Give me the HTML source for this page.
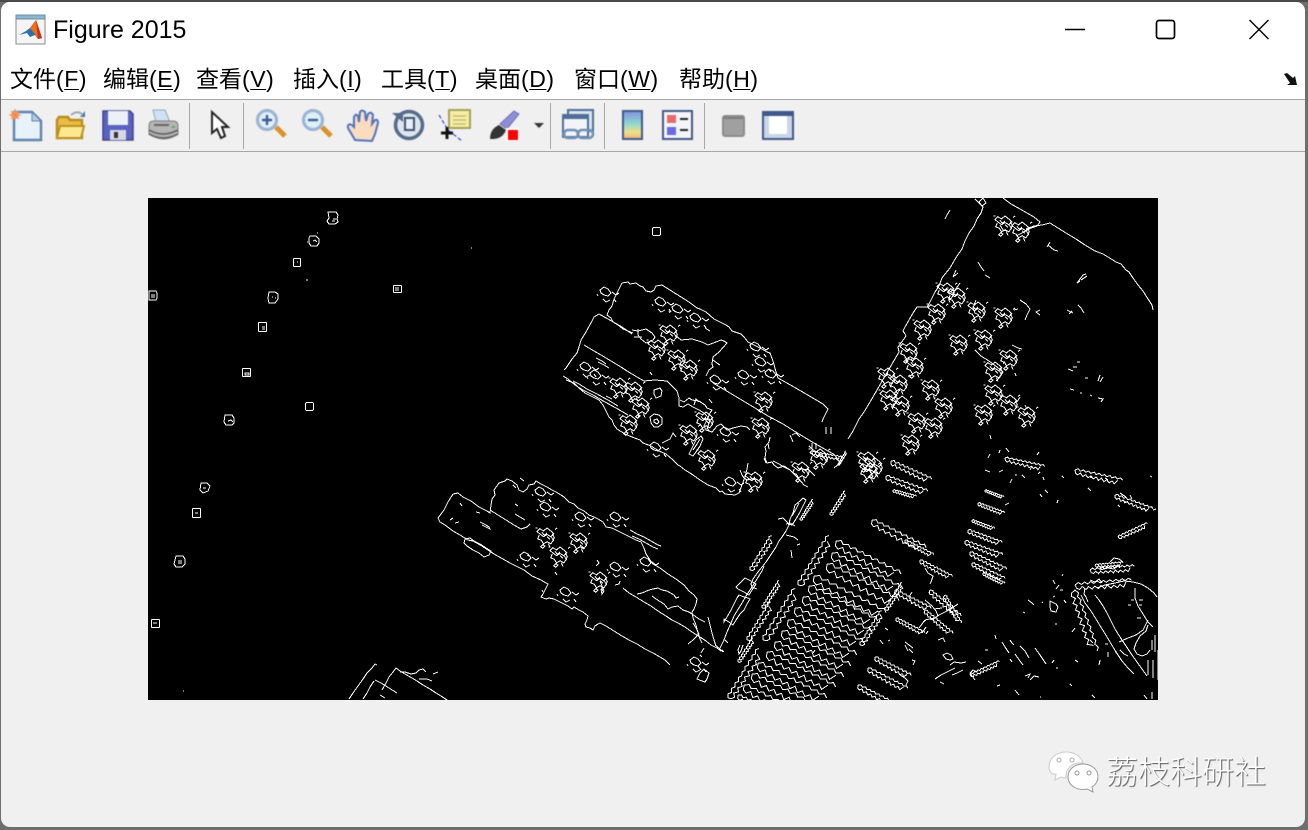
<!DOCTYPE html>
<html lang="zh">
<head>
<meta charset="utf-8">
<title>Figure 2015</title>
<style>
html,body{margin:0;padding:0;width:1308px;height:830px;overflow:hidden;background:#6e6e6e}
#top{position:absolute;left:0;top:0;width:1308px;height:2px;background:#4a4a4a}
#win{position:absolute;left:1px;top:2px;width:1304px;height:825px;background:#f0f0f0;border-radius:9px;overflow:hidden}
#head{position:absolute;left:0;top:0;width:1304px;height:97px;background:#fff;border-bottom:1px solid #a6a6a6}
#tb{position:absolute;left:0;top:98px;width:1304px;height:51px;background:#f0f0f0;border-bottom:1px solid #a6a6a6}
.t{position:absolute;white-space:nowrap;color:#000;font-family:"Liberation Sans","Noto Sans CJK SC",sans-serif}
#title{left:53px;top:15px;font-size:25px;line-height:30px}
.m{top:64px;font-size:23px;line-height:30px}
.m b{font-weight:400;letter-spacing:.55px}
.m u{text-underline-offset:2px;text-decoration-thickness:1px}
.sep{position:absolute;top:103px;width:1px;height:46px;background:#a8a8a8}
svg{position:absolute;display:block}
#img path{vector-effect:non-scaling-stroke}
#icons{filter:blur(.55px)}
#wm{left:1106px;top:752px;font-size:32px;line-height:40px;color:#fff;font-family:"Liberation Sans","Noto Sans CJK SC",sans-serif;text-shadow:1px 1px 1px #555;font-weight:300}
</style>
</head>
<body>
<div id="top"></div>
<div id="win"><div id="head"></div><div id="tb"></div></div>

<!-- app icon -->
<svg style="left:15px;top:14px;filter:blur(.3px)" width="32" height="31" viewBox="0 0 32 31">
<rect x="1" y="1" width="29" height="29" fill="#f5f5f5" stroke="#8a8a8a"/>
<rect x="1" y="1" width="29" height="4" fill="#8fb4cf" stroke="#6d8ea8"/>
<path d="M4 21l7-4 4-3 6-8 6 18-4 1-3-4-5 2-3-4z" fill="#2f6fb0"/>
<path d="M15 14l6-8 6 18-4 1-3-5z" fill="#e8711a"/>
<path d="M21 6l6 18-4 1z" fill="#c9301f"/>
</svg>
<div class="t" id="title">Figure 2015</div>

<!-- window controls -->
<svg style="left:1060px;top:15px" width="220" height="30" viewBox="0 0 220 30">
<path d="M5 14.5h20" stroke="#000" stroke-width="1.6"/>
<rect x="96.500" y="5.500" width="18" height="18" rx="2.500" fill="none" stroke="#000" stroke-width="1.700"/>
<path d="M189.500 5l19 19M208.500 5l-19 19" stroke="#000" stroke-width="1.400"/>
</svg>

<!-- menu -->
<div class="t m" style="left:10px">文件<b>(<u>F</u>)</b></div>
<div class="t m" style="left:103px">编辑<b>(<u>E</u>)</b></div>
<div class="t m" style="left:196px">查看<b>(<u>V</u>)</b></div>
<div class="t m" style="left:293px">插入<b>(<u>I</u>)</b></div>
<div class="t m" style="left:381px">工具<b>(<u>T</u>)</b></div>
<div class="t m" style="left:475px">桌面<b>(<u>D</u>)</b></div>
<div class="t m" style="left:574px">窗口<b>(<u>W</u>)</b></div>
<div class="t m" style="left:679px">帮助<b>(<u>H</u>)</b></div>
<svg style="left:1283px;top:72px" width="16" height="14" viewBox="0 0 16 14">
<path d="M1 2l3-1 6 5 2-2 2 9H4l3-2z" fill="#111"/>
</svg>

<div class="sep" style="left:189px"></div>
<div class="sep" style="left:243px"></div>
<div class="sep" style="left:550px"></div>
<div class="sep" style="left:604px"></div>
<div class="sep" style="left:704px"></div>

<!-- toolbar icons -->
<svg id="icons" style="left:0;top:100px" width="810" height="50" viewBox="0 100 810 50">
<!-- new -->
<path d="M14 112h18l9 9v19H14z" fill="#e8f2fb" stroke="#5f83ad" stroke-width="2.400"/>
<path d="M32 112v9h9z" fill="#b9cde3" stroke="#5f83ad"/>
<circle cx="15" cy="115" r="4" fill="#f4a060"/><path d="M15 109v12M9 115h12M11 111l8 8M19 111l-8 8" stroke="#ee8a50"/>
<!-- open -->
<path d="M57 138v-18l2-3h9l2 3h12v18z" fill="#e9bd45" stroke="#b98d1d" stroke-width="2.400"/>
<path d="M57 138l3-12h24l-3 12z" fill="#fde88f" stroke="#bc931f" stroke-width="2"/>
<path d="M71 115q6-5 11-1" fill="none" stroke="#9aaab8" stroke-width="2"/><path d="M85 111v6h-5z" fill="#4c7ba5"/>
<!-- save -->
<path d="M103 111h27l3 3v26h-30z" fill="#5a62c2" stroke="#3e4585" stroke-width="1.500"/>
<rect x="108" y="111" width="20" height="14" fill="#eef0f8"/>
<rect x="110" y="130" width="16" height="10" fill="#d8d8e4"/><rect x="114" y="132" width="4" height="6" fill="#333"/>
<!-- print -->
<path d="M153 110h12l5 12h-14z" fill="#cfe2f5" stroke="#93a7bb"/>
<path d="M149 126q0-5 5-5h19q5 0 5 5v8q-14 10-29 0z" fill="#b5b5b5" stroke="#7d7d7d"/>
<path d="M149 130q14 8 29 0M149 134q14 8 29 0" fill="none" stroke="#666" stroke-width="1.800"/><path d="M154 125h15" stroke="#666" stroke-width="2"/><path d="M172 127h3" stroke="#4caf50" stroke-width="2"/>
<!-- pointer -->
<path d="M212 112v21l5-4 4 9 4-2-3-9h6z" fill="#fff" stroke="#222" stroke-width="2"/>
<!-- zoom in -->
<path d="M276 127l9 9" stroke="#db922d" stroke-width="5"/>
<circle cx="267" cy="120" r="9.500" fill="#dff0fa" stroke="#9db5d4" stroke-width="3.200"/>
<path d="M262 120h10M267 115v10" stroke="#3c5b90" stroke-width="2.400"/>
<!-- zoom out -->
<path d="M322 127l9 9" stroke="#db922d" stroke-width="5"/>
<circle cx="313" cy="120" r="9.500" fill="#dff0fa" stroke="#9db5d4" stroke-width="3.200"/>
<path d="M308 120h10" stroke="#3c5b90" stroke-width="2.400"/>
<!-- hand -->
<path d="M355 140l-7-12q-1-5 4-3l2 2 0-10q2-4 4-1l1 6 1-10q2-3 5 0l1 9 2-7q3-3 5 1l-1 9 3-4q3-1 3 3l-3 11-3 7z" fill="#fbdcbf" stroke="#4f74c4" stroke-width="2"/>
<!-- rotate -->
<circle cx="409" cy="125" r="13.500" fill="#dfe5ec" stroke="#556c8a" stroke-width="3.500"/>
<path d="M392 113h11v9z" fill="#556c8a"/>
<rect x="405" y="118" width="9" height="12" fill="#e8eef5" stroke="#3c5370" stroke-width="2"/>
<!-- data cursor -->
<rect x="449" y="110" width="21" height="18" fill="#f4eda2" stroke="#a4a15e" stroke-width="2"/>
<path d="M453 116h13M453 120h13M453 124h13" stroke="#b5ae5e"/>
<path d="M439 115l9 15 14 11" fill="none" stroke="#2020e0" stroke-dasharray="4 2"/>
<path d="M447 127v12M441 133h12" stroke="#111" stroke-width="3"/>
<!-- brush -->
<path d="M500 124l14-13 5 3-12 15z" fill="#8d8fd6" stroke="#6c6eb3"/>
<path d="M490 139q0-10 9-14l7 5q-3 8-12 9z" fill="#333"/>
<rect x="506" y="128" width="13" height="13" fill="#fff"/><rect x="508" y="130" width="10" height="10" fill="#f00"/>
<path d="M534 123h10l-5 5z" fill="#333"/>
<!-- link -->
<rect x="568" y="110" width="25" height="21" fill="#dde4ee" stroke="#4d6f99" stroke-width="2"/>
<rect x="563" y="115" width="25" height="22" fill="#f3f4f8" stroke="#4d6f99" stroke-width="2"/>
<rect x="563" y="115" width="25" height="4" fill="#4d6f99"/>
<rect x="564" y="130" width="14" height="8" rx="4" fill="none" stroke="#6f90b5" stroke-width="2.600"/>
<rect x="578" y="130" width="15" height="8" rx="4" fill="none" stroke="#6f90b5" stroke-width="2.600"/>
<!-- colorbar -->
<defs><linearGradient id="cb" x1="0" y1="0" x2="0" y2="1"><stop offset="0" stop-color="#7f8fe0"/><stop offset=".45" stop-color="#8ed8d0"/><stop offset=".75" stop-color="#eee08a"/><stop offset="1" stop-color="#f2b27a"/></linearGradient></defs>
<rect x="623" y="111" width="19" height="28" fill="url(#cb)" stroke="#41598a" stroke-width="2"/>
<!-- legend -->
<rect x="663" y="111" width="29" height="28" fill="#f4f5f8" stroke="#41598a" stroke-width="2"/>
<rect x="667" y="115" width="9" height="8" fill="#e86a6a"/><rect x="667" y="127" width="9" height="8" fill="#6a6ae8"/>
<path d="M680 119h8M680 130h8" stroke="#222" stroke-width="2"/>
<!-- gray box -->
<rect x="723" y="116" width="21" height="20" rx="2" fill="#a0a0a0" stroke="#8c8c8c" stroke-width="2"/>
<path d="M724 118h19" stroke="#7d7d7d" stroke-width="2"/>
<!-- frame -->
<rect x="763" y="112" width="30" height="27" fill="#c8d6e8" stroke="#41598a" stroke-width="2"/>
<rect x="763" y="112" width="30" height="4" fill="#41598a"/>
<rect x="769" y="116" width="18" height="18" fill="#fff"/>
</svg>

<!-- edge image -->
<svg id="img" style="left:148px;top:198px" width="1010" height="502" viewBox="148 198 1010 502" shape-rendering="crispEdges">
<defs>
<path id="r" d="M0 0l5-3 4 3 5-3 4 3 5-3 4 3 5-3 4 3 5-3 4 3 5-3 4 3 5-3 4 3 5-3 4 3 5-3 4 3M0 0l2 5 4 2 4-4 5 5 4-4 5 4 4-4 5 4 4-4 5 5 4-5 5 5 4-4 5 4 4-4 5 4 4-7"/>
<g id="c" transform="scale(.72)"><path d="M0 5l4-4 5 3 5-4 5 4 4 4-4 4-5-3-5 3-4-3zM3 10l-2 5 5 2 3 5 5-3 5 3 4-5-3-4M7 6l3 4 4-3M14 12l4 4M21 8l3 5-2 5M-2 0h3M25 2l3-2M8 23l-3 3 3 2 3-3zM16 22l2 5"/></g>
<path id="b" d="M0 0l4-3 4 2 3 4-3 3-4-1-3-2zM12 2l4 3 3-2M3 9l3 3 4-2M14 9l2 3M-3 4l1 2"/>
<path id="w" d="M0 0l4-2 4 3 4-3 4 3 4-3 4 3 3-2"/>
</defs>
<rect x="148" y="198" width="1010" height="502" fill="#000"/>
<g fill="none" stroke="#fff" stroke-width="1">
<!-- small objects -->
<path d="M328 212h8l2 3-1 4 1 3-3 2h-6l-2-3 2-3zM333 219h3M332 221h3"/>
<path d="M310 236h6l3 3v4l-2 3h-6l-2-3v-5zM313 241l2-1 2 2M317 233h1M307 242h1"/>
<rect x="293.500" y="258.500" width="7" height="8" rx="1"/><path d="M297 262h1"/>
<path d="M269 292h6l3 2v5l-3 4h-6l-1-5zM272 297h1M275 298h1"/>
<rect x="258.500" y="322.500" width="8" height="9" rx="1"/><path d="M262 327h3M262 329h3"/>
<rect x="242.500" y="368.500" width="8" height="8" rx="1"/><path d="M245 373h4v2h-4z"/>
<path d="M225 415h7l2 3v5l-2 2h-6l-2-3zM228 421l3-1 2 2"/>
<rect x="305.500" y="402.500" width="8" height="8" rx="1.500"/>
<path d="M201 483h6l3 3-2 5-5 2-3-3zM203 488h3"/>
<rect x="192.500" y="508.500" width="8" height="9" rx="1"/><path d="M195 513h3"/>
<path d="M176 556h7l2 3v5l-3 3h-6l-2-3zM178 561h4M178 563h4"/>
<rect x="151.500" y="619.500" width="8" height="8" rx="1"/><path d="M153 623h4"/>
<path d="M150 291h6l1 2v5l-1 2h-7v-9zM151 295h4M151 297h4"/>
<rect x="393.500" y="285.500" width="8" height="7" rx="1"/><path d="M395 288h4M395 290h4"/>
<rect x="652.500" y="227.500" width="8" height="8" rx="1.500"/>
<path d="M471 248h1M183 691h1M307 279v2"/>

<!-- upper pier -->
<path d="M622 283l6-1 2 2 6-1 4 3 3 1 3 4 5 1 3-2 2-4 6-1 27 17 8 6 3 1 6 3 8 7 12 6 3 2 3 4 9 3 3 3 4 5 14 7 5 3 3 1 3 8 3 11 2 6 16 9 12 7 17 10 5 5-5 10-1 3"/>
<path d="M622 283l-8 16-2 7-3 4-2 5 4 3 2 4 5 3 5 4 10 4"/>
<path d="M632 334l-10-7-14-8-9-5-5 3-2 4-6 11-5 8-2 7-2 6-5 6-6 9-2 2"/>
<path d="M563 376l5 3 7 6 8 5 10 5 12 7 11 6 12 7M573 381l6 3 8 5 10 5 11 6 10 6M566 380l8 3 5 5 6 5 8 4 6 3 4 5 3 6 3 6 3 3 2 5 3 4 8 5 7 3 8 3 3 3 8 3 8 5 7 3 7 6 5 5 2 1 5 4 5 3 3 2 7 5 8 5 8 3 4 4 2-1 3 3 10 1 4-2 3-8 3-8 2-8 1-6"/>
<path d="M584 345l10 6 7 4 10 6 10 6 6 4 10 6 7 4 11-1 12 1 5 5 5 5 2 7v8l4 1 5-3 5 3 6 3 5 3 2 2 4 5-3 9"/>
<path d="M632 330l6 1 8-2 6 4 3 4-2 3-7 3-5-4-3-4v-6M634 337h8"/>
<path d="M675 335l6 5 11-1 10 3 6 3 8-3 5-2 3 1 3 2-8 9-6 5-1 7 1 3-4 3-3 6"/>
<path d="M713 383l12 7 15 9 15 9 13 8 15 8 16 10 15 9 14 8 7 4"/>
<path d="M680 400l4 2 5-4 3 2 7 1 6 4 2 3 5 2-2 3-3 7-3 6 2 4 6 2 5-6 4-2 3 3 3 3 6-2 8-2 6 1 3 3"/>
<path d="M770 437l-1 5-4 5 1 4-1 7 2 5 5-1 2 3 4 3 6-2 3 2 3 2 5 5 4 4 5 6 4 2"/>
<path d="M740 470l2 5 2 3 3 2 5-1 4 1"/>
<path d="M802 470l6-1 4 4 3 3M817 452l5 3 3 4 2 2 1-4M809 446l3 3 4 3M792 435l4-2 4 4"/>
<!-- lower pier -->
<path d="M453 494l-5 8-4 8-6 8 2 4 5 3 8 6 7 4 8 5 5 1 9 5 12 8 16 9 14 7 8 6 9 4 5 3 2 1-2 4-3 6-2 3 5 2 3-1 5 1 8 4 6 3 4 3 2-2 5 3 4 2 5 4-1 4-2 4 1 3 4 1 3 2 2-4 3-2 2-1 6 3 8 5 8 5 7 4 8 4 8 5 8 4 7 4 5 3 5 5"/>
<path d="M453 494l5-1 5 4 8 4 8 6 8 4 3 2 1-8 1-6 3-4-1-5 5-7 6-2 2-2 5 2 5 4 2 5 4 2 4-3 2-4 5-1 2-3 5 3 6 3 5 3 4 2 5 3 3 2 5 5 5 2 4 4 6 3 5 4 5 2 4 2 5 3 3 5 6 1 8 4 8 4 8 4 5 2 3 6 2 6 4 6 3 4 7 4 8 6 8 5 8 6 5 6 5 4 3 4-1 5-2 5-2 3 1 6 3 7 2 8 2 6 2 4"/>
<path d="M490 510l8 5 8 5 8 5 7 4 6-2 3-3M515 514l5 3 5 3"/>
<path d="M465 539l-1 4 3 3 6 4 6 3 5 4 5-2 2-4-5-3-6-4-6-3-4-3zM480 522l6 3 3 2 1 2-2-1-6-3"/>
<path d="M623 588l6 5 7 4 8 5 7 4 7 5 8 5 6 4 6 3 7 4 7 5 8 5 6 4 5 4 6 3 4 3M637 594l5-1 7-3 4-1 5-1 4 2 5 1 7 4 2 3 3-1M652 596l4 3 8 5 4 5 4-2 6-1 5 4 6 2 3 2 7 5 6 3"/>
<path d="M693 623l3 5 3 6-6 6-5 4M708 617l2 8 2 8 2 7 2 6"/>
<path d="M700 673l-3 6 5 2 3 1 2-3 2-6-5-4zM715 645l5 4 3 3"/>
<!-- road left edge -->
<path d="M975 199l8 8-2 6-4 6-3 7-5 7-4 8-3 8-5 7-3 5-4 7-5 6-3 4-3 8-4 6-3 6-3 6-2 3h-10l-4 6-4 7-4 7-2 4 2 3 1 2-5 7-3 4 1 5-7 12-7 12-8 14-7 12-6 10-5 7-6 12-5 8"/>
<path d="M1003 198l8 6 9 5 7 4 7 4 6 5-3 4-6 2-9 5-6 3M1026 229l8-3 8-1 8-2 8 5 8 5 10 6 9 6 10 6 8 3 5 3 8 5 5 2 5 6 3 2 4 6 5 7 5 6 5 8 4 6 1 5"/>
<path d="M720 648l4-8 3-8 4-9 3-7 3-5 5-8 4-7 6-9 5-8 5-8 2-5"/>
<path d="M778 519l5-1 4 4 2 3-3 6-4 6-3 4-3 6-6 9-4 6-4 5-4 5-5 7-2 5 1 3 5 2"/>
<path d="M724 622l3-5 4-7 3-6 3-6 2-3 5 2 4 1 2 1-3 5-3 6-4 4-4 6-3 5-4-3-5-3z"/>
<path d="M740 583l5-5 6 3 5 3-4 6-3 5-5-3-6-3-2-2z"/>
<path d="M795 505l5-4 3-3 3 2-2 4-4 8-4 7-4 6-3-1 1-5 3-6zM799 503l-3 6-4 7M786 524l4-1 5 3M786 535l8 2 4 3M791 550l1 8M797 545l3-1"/>
<path d="M725 640l3 3M740 645l-2 5 1 4 2-3 2-6M773 461l6 3 5 3 6 3M764 458l2 5M835 455l5 8-6 5M815 650l-2 3"/>
<!-- bottom left pier -->
<path d="M349 699l4-6 5-7 5-7 4-6 5-5 3-4 2 1M363 699l4-6 3-6 4-6M382 690l4-7 3-6 4-5 3-4 4 3 5 3 7 4 5 3 6 4 7 4 6 4 5 3 6 4 4 4M400 672h5l6 2 5-1 3-3 4-1 3 3M438 672l-5 2M375 680l6 3 8 5 8 5M380 695l5 3M419 679h8l5 2"/>
<!-- dense road-side strips -->
<g>
<use href="#r" transform="translate(728,698) rotate(-58) scale(.72)"/>
<use href="#r" transform="translate(763,640) rotate(-58) scale(.75)"/>
<use href="#r" transform="translate(798,585) rotate(-58) scale(.72)"/>
<use href="#r" transform="translate(800,520) rotate(-58) scale(.3)"/>
<use href="#r" transform="translate(747,640) rotate(-58) scale(.55)"/>
<use href="#r" transform="translate(762,608) rotate(-58) scale(.4)"/>
<use href="#r" transform="translate(738,662) rotate(-58) scale(.35)"/>
<use href="#r" transform="translate(830,515) rotate(-58) scale(.35)"/>
<use href="#r" transform="translate(750,570) rotate(-58) scale(.5)"/>
</g>
<!-- dense blocks by the junction -->
<g>
<use href="#c" x="858" y="452"/><use href="#c" x="865" y="458"/><use href="#c" x="860" y="463"/>
<use href="#r" transform="translate(891,461) rotate(24) scale(.55)"/>
<use href="#r" transform="translate(886,476) rotate(20) scale(.55)"/>
<use href="#r" transform="translate(893,490) rotate(15) scale(.3)"/>
<use href="#r" transform="translate(812,452) rotate(10) scale(.38)"/>
<use href="#r" transform="translate(838,465) rotate(-60) scale(.2)"/>
</g>
<!-- building rows -->
<g>
<use href="#r" transform="translate(872,520) rotate(27) scale(.75)"/>
<use href="#r" transform="translate(836,541) rotate(27) scale(.9)"/>
<use href="#r" transform="translate(832,553) rotate(27) scale(.95)"/>
<use href="#r" transform="translate(827,564) rotate(27) scale(1)"/>
<use href="#r" transform="translate(814,576) rotate(27) scale(1)"/>
<use href="#r" transform="translate(809,586) rotate(27) scale(.95)"/>
<use href="#r" transform="translate(803,597) rotate(27) scale(.95)"/>
<use href="#r" transform="translate(795,608) rotate(27) scale(.95)"/>
<use href="#r" transform="translate(788,620) rotate(27) scale(.95)"/>
<use href="#r" transform="translate(782,631) rotate(27) scale(.95)"/>
<use href="#r" transform="translate(775,642) rotate(27) scale(.95)"/>
<use href="#r" transform="translate(767,652) rotate(27) scale(.95)"/>
<use href="#r" transform="translate(758,663) rotate(27) scale(.95)"/>
<use href="#r" transform="translate(752,674) rotate(27) scale(.95)"/>
<use href="#r" transform="translate(744,685) rotate(27) scale(.9)"/>
<use href="#r" transform="translate(738,695) rotate(27) scale(.6)"/>
<use href="#r" transform="translate(875,657) rotate(27) scale(.5)"/>
<use href="#r" transform="translate(868,668) rotate(27) scale(.55)"/>
<use href="#r" transform="translate(858,685) rotate(27) scale(.55)"/>
<use href="#r" transform="translate(896,618) rotate(27) scale(.4)"/>
<use href="#r" transform="translate(860,645) rotate(-58) scale(.5)"/>
<use href="#r" transform="translate(885,610) rotate(-58) scale(.4)"/>
<use href="#r" transform="translate(895,590) rotate(27) scale(.5)"/>
<use href="#r" transform="translate(920,560) rotate(27) scale(.45)"/>
<use href="#r" transform="translate(905,540) rotate(27) scale(.4)"/>
<use href="#r" transform="translate(930,590) rotate(40) scale(.5)"/>
<use href="#r" transform="translate(925,610) rotate(40) scale(.45)"/>
<use href="#r" transform="translate(945,595) rotate(60) scale(.4)"/>
<use href="#r" transform="translate(985,490) rotate(20) scale(.25)"/>
<use href="#r" transform="translate(978,503) rotate(20) scale(.35)"/>
<use href="#r" transform="translate(972,520) rotate(20) scale(.3)"/>
<use href="#r" transform="translate(968,530) rotate(20) scale(.45)"/>
<use href="#r" transform="translate(965,541) rotate(20) scale(.5)"/>
<use href="#r" transform="translate(970,552) rotate(25) scale(.5)"/>
<use href="#r" transform="translate(972,563) rotate(25) scale(.45)"/>
<use href="#r" transform="translate(983,573) rotate(25) scale(.3)"/>
<use href="#r" transform="translate(1075,470) rotate(12) scale(.6)"/>
<use href="#r" transform="translate(1005,458) rotate(12) scale(.5)"/>
<use href="#r" transform="translate(1115,495) rotate(20) scale(.5)"/>
<use href="#r" transform="translate(1118,537) rotate(-25) scale(.4)"/>
<use href="#r" transform="translate(1090,570) rotate(-5) scale(.55)"/>
<use href="#r" transform="translate(1095,565) rotate(-5) scale(.35)"/>
<use href="#r" transform="translate(1075,585) rotate(-5) scale(.7)"/>
<use href="#r" transform="translate(970,675) rotate(-25) scale(.4)"/>
<use href="#r" transform="translate(1075,590) rotate(70) scale(.8)"/>
</g>
<!-- clusters upper-right -->
<g>
<use href="#c" x="995" y="216"/><use href="#c" x="1012" y="222"/>
<use href="#c" x="937" y="283"/><use href="#c" x="948" y="288"/><use href="#c" x="928" y="304"/><use href="#c" x="914" y="320"/>
<use href="#c" x="900" y="343"/><use href="#c" x="906" y="358"/><use href="#c" x="878" y="368"/><use href="#c" x="890" y="375"/><use href="#c" x="880" y="390"/><use href="#c" x="892" y="396"/>
<use href="#c" x="908" y="413"/><use href="#c" x="925" y="418"/><use href="#c" x="902" y="435"/><use href="#c" x="968" y="302"/>
<use href="#c" x="995" y="308"/><use href="#c" x="975" y="330"/><use href="#c" x="950" y="335"/>
<use href="#c" x="1000" y="350"/><use href="#c" x="985" y="362"/>
<use href="#c" x="985" y="385"/><use href="#c" x="975" y="405"/><use href="#c" x="1018" y="407"/>
<use href="#c" x="922" y="380"/><use href="#c" x="935" y="398"/><use href="#c" x="1000" y="395"/>
</g>
<path d="M950 210l-3 5-2 4M983 198l-4 4 3 4 4-3zM978 262l3 5 3 4M985 275l5 3M956 270l-3 7 5-4M955 290l5-7M1000 225l3 5 4 1M1050 242l-3 5M1048 245l6 5 4 1M1081 280l6-4M1080 281l-3 2 6-8 3-1M1072 311l-3 3M1020 300l6 4 4 5-3 6-2 5M975 350l6 6 8 5 8 6 6 5-3 5-4 4M976 300l-3 8 2 5 4 2M1018 309l-4 1M1012 345l6 3 4 1M1040 310l-4 2 4 3M1078 305l3 3 3 5M1067 310l6 3"/>
<path d="M1077 362h3M1073 367h4M1068 369l5 2M1085 378h3M1100 375l-2 6M1070 389l4 1M1080 393h2M1090 395l2 1M1098 398l5 1-2 3M1103 377l-3 5M1015 373l1 3M1039 452l-2 3M1020 397l-3 5M1025 405l2 4M990 435l1 4M1006 448l3 4"/>
<!-- clusters upper pier -->
<g>
<use href="#c" x="660" y="325"/><use href="#c" x="648" y="340"/><use href="#c" x="668" y="350"/>
<use href="#c" x="680" y="360"/><use href="#c" x="610" y="378"/><use href="#c" x="625" y="382"/>
<use href="#c" x="632" y="398"/><use href="#c" x="680" y="425"/>
<use href="#c" x="696" y="412"/><use href="#c" x="698" y="450"/><use href="#c" x="752" y="418"/>
<use href="#c" x="755" y="392"/><use href="#c" x="620" y="415"/><use href="#c" x="745" y="472"/>
<use href="#c" x="792" y="462"/><use href="#c" x="810" y="449"/>
<use href="#b" x="655" y="300"/><use href="#b" x="672" y="307"/><use href="#b" x="600" y="290"/>
<use href="#b" x="690" y="316"/><use href="#b" x="738" y="373"/><use href="#b" x="765" y="372"/>
<use href="#b" x="720" y="430"/><use href="#b" x="650" y="445"/>
<use href="#b" x="725" y="480"/><use href="#b" x="750" y="345"/><use href="#b" x="755" y="360"/>
<use href="#b" x="590" y="373"/><use href="#b" x="580" y="365"/><use href="#b" x="710" y="378"/>
</g>
<path d="M713 360l4 3 3 2M705 328l5 3M650 372l2 3M596 358l6 3 4 3M598 362l6 3 5 3M694 405l2-6 3 3M709 399l3 4M705 420l3-1M826 427v7M831 427v7M812 443v6M816 443v6M768 443l1 6M790 435l3 7M662 443l8-4 3-6 3 4M606 396l6 3M654 390l6-2 2 3-1 5-5 2-2-4z"/>
<path d="M650 417l4-3 5 1 3 3v6l-4 3h-4l-3-4zM654 420l3-1 2 3-2 2-3-2z"/>
<path d="M689 454l4-8 3-6 5-4 2 3-3 7-4 6-3 4zM693 450l4-6 3-5"/>
<!-- clusters lower pier -->
<g>
<use href="#c" x="537" y="528"/><use href="#c" x="570" y="533"/><use href="#c" x="550" y="547"/>
<use href="#c" x="590" y="572"/><use href="#b" x="610" y="515"/><use href="#b" x="535" y="490"/>
<use href="#b" x="540" y="505"/><use href="#b" x="575" y="515"/>
<use href="#b" x="520" y="555"/><use href="#b" x="610" y="565"/>
<use href="#b" x="640" y="560"/><use href="#b" x="560" y="590"/><use href="#b" x="690" y="660"/>
</g>
<path d="M630 530l7 4 7 3 7 4 7 4 3 1M632 536l7 3 7 4 7 4 5 2M460 503l2 3M450 520l3-2M455 523l4-1M476 512l4 1M513 485l3 3M520 478l4 3M515 504l3 2M527 555l2 1M580 545l4 3M542 590l1 2M555 572l2 3M597 560l2 3-3 3M615 585l4-1 1-3M600 581l2 5 2 5-2 3-1-5M700 655l2 2M704 648l-3 5M722 650l2 2M698 666l3 4"/>
<!-- right curved structure -->
<path d="M1095 595l4 5 4 6 4 7 4 8 4 8 5 8 6 9 6 9 5 7 5 7 5 7M1081 595l4 8 6 8 5 8 3 5 5 8 6 10 6 10 6 9 6 7 6 6M1097 588l8-3 10-2 9-2 9 1 8 2 7 4 6 5 3 4M1135 588v10l3 8 5 8 5 8 5 5M1148 620l-5 10-7 5-8 3-9 4M1148 625l-2 6-6 5-4 7-2 6 3 5 5 2 5-2 3-4M1120 650l4 4 4 2M1155 635v17M1152 640v10M1148 660v15M1153 660v18M1158 650v30M1152 692v7M1144 695l3 4"/>
<path d="M1085 588l-1 6 2 3 2 5M1090 580l5 2 4-3 3 4M1100 570l8-2 6 1 5-4M1110 562l4-4 5 1 4 3M1128 605h3M1139 605h3M1131 600h3M1139 600h4M1137 618h4M1090 640l3 3M1105 644h3M1108 652v5M1115 652h2M1100 660l-1 5M1055 624h2M1064 600l2 3M1050 601l6 3 2 3-2 5-5-1-1-4zM1059 585l-3 4M1060 590h3M1015 654l5 7 3 4M1010 640l2 3 2 2M1035 648l5 7 4 6 2 3M1056 668h2M1042 602l1 1M1028 600l4 3 2 2M1054 660l-2 3M1025 676l5-2-2 4M1030 680l4-4 5 1"/>
<path d="M1015 690l4 5M1070 684l2 2M1092 695l3 3M1040 697h1M1075 660l3 2M1075 628l-3 4M1053 580l2 4M1023 612l2 1M1063 574l-1 2M1053 597l2-1"/>
<!-- lower-middle scatter -->
<path d="M925 620l9-2M925 620l-3 4-3 4M958 604l-9 6-10 5-7 5M942 608l-8 1M926 627l-4 6M905 642l8 6M913 653l-4-4M912 660l3 1-2 4M978 661l4 3M950 665l4-3 7 1 5-1M955 668l-6 3-8 4-6 4M952 675l5-2 6-3M940 682l4 2M975 680l-5-7 3-3 4 2M1002 642l3 5 4 6M1020 646l5 5 4 7M1010 659l2 3M1000 685l-3 1M995 635l1 4M985 650h3M943 655l4-2 4 2 2 4-3 1-4-1zM938 640l5-2 2 4M900 675l5 3 3 3-2 4M885 628l3 2M912 592l-3 5 2 4M925 568l3 5 5 3-2 6-1 2M925 600l7 6 4 5 2 5M890 640l-2 1M880 640l3 4M905 645l3 6M923 622l3-2M928 631l-2 3"/>
<path d="M985 470l5 2M1010 483l2-4M1038 474l2-2M1043 477l1 3M988 458l2-4M1000 450l-1 3M1030 470l2-4M1003 470l-4 2M1015 475h2M1022 475l3 3M1040 494l2 3M1088 488l3 3M1062 476l2 2M1058 500l-1 3M1045 490l3 3M1130 495l2 4M1153 510l3-1M1150 476l2 1"/>
<path d="M1120 493l6 4M1122 500l4 2M1105 478l3 2M1090 477l3 1M1040 465h2M1005 505l4-2M1118 505l2 2"/>
</g>
</svg>

<!-- watermark -->
<svg style="left:1046px;top:749px" width="60" height="46" viewBox="0 0 60 46">
<path d="M3 18c0-9 8-15 17-15 8 0 15 4 17 11-10-1-18 5-17 15-2 0-3 0-5-1l-6 3 1-6C5 26 3 22 3 18z" fill="#fff" stroke="#ccc"/>
<path d="M22 28c0-8 7-13 15-13s15 5 15 13c0 5-3 8-6 10l1 5-6-3c-9 2-19-3-19-12z" fill="#fff" stroke="#999"/>
<circle cx="13" cy="11" r="2" fill="none" stroke="#aaa"/><circle cx="26" cy="11" r="2" fill="none" stroke="#aaa"/>
<circle cx="31" cy="24" r="2" fill="none" stroke="#999"/><circle cx="43" cy="24" r="2" fill="none" stroke="#999"/>
</svg>
<div class="t" id="wm">荔枝科研社</div>
</body>
</html>
